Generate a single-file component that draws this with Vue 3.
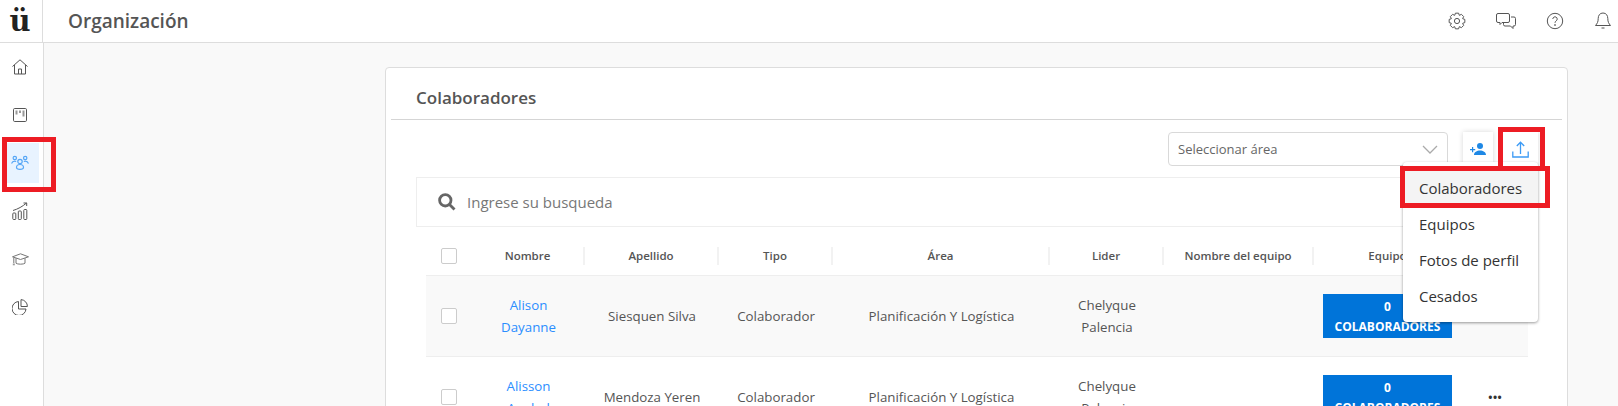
<script setup>
const navItems = [
  { id: 'home', active: false },
  { id: 'board', active: false },
  { id: 'team', active: true },
  { id: 'chart', active: false },
  { id: 'cap', active: false },
  { id: 'pie', active: false },
];

const exportOptions = ['Colaboradores', 'Equipos', 'Fotos de perfil', 'Cesados'];

const columns = ['Nombre', 'Apellido', 'Tipo', 'Área', 'Lider', 'Nombre del equipo', 'Equipo'];

const rows = [
  { name: 'Alison Dayanne', lastName: 'Siesquen Silva', type: 'Colaborador', area: 'Planificación Y Logística', leader: 'Chelyque Palencia' },
  { name: 'Alisson Anabel', lastName: 'Mendoza Yeren', type: 'Colaborador', area: 'Planificación Y Logística', leader: 'Chelyque Palencia' },
];

// gear outline, 8 teeth
function gearPath() {
  const points = [];
  for (let i = 0; i < 8; i++) {
    const a = (i * Math.PI) / 4;
    const spots = [[-0.39, 6.1], [-0.2, 8], [0.2, 8], [0.39, 6.1]];
    spots.forEach(([off, r]) => {
      points.push(`${(9 + r * Math.sin(a + off)).toFixed(2)} ${(9 - r * Math.cos(a + off)).toFixed(2)}`);
    });
  }
  return 'M' + points.join('L') + 'Z';
}
const gear = gearPath();
</script>

<template>
  <div class="app">
    <header class="topbar">
      <div class="logo">ü</div>
      <h1 class="page-title">Organización</h1>
      <div class="top-icons">
        <svg width="18" height="18" viewBox="0 0 18 18" class="line-icon">
          <path :d="gear" stroke-linejoin="round" />
          <circle cx="9" cy="9" r="2.6" />
        </svg>
        <svg width="20" height="18" viewBox="0 0 20 18" class="line-icon">
          <path d="M2 1.5h10a1.5 1.5 0 0 1 1.5 1.5v6A1.5 1.5 0 0 1 12 10.500H6L4 12.500v-2H2A1.500 1.500 0 0 1 .5 9V3A1.500 1.500 0 0 1 2 1.500Z" />
          <path d="M15 5h3a1.500 1.500 0 0 1 1.500 1.500v6A1.500 1.500 0 0 1 18 14h-1v2.500L14.500 14H9a1.500 1.500 0 0 1-1.500-1.500v-1.500" />
        </svg>
        <svg width="18" height="18" viewBox="0 0 18 18" class="line-icon">
          <circle cx="9" cy="9" r="7.700" />
          <path d="M6.800 7a2.200 2.200 0 1 1 3.500 1.800c-.8.6-1.300 1-1.300 2" />
          <circle cx="9" cy="13" r=".5" />
        </svg>
        <svg width="18" height="18" viewBox="0 0 18 18" class="line-icon">
          <path d="M9 1c3.300 0 4.800 2.600 4.800 5.500 0 3.500 1 5 2.700 7H1.500c1.700-2 2.700-3.500 2.700-7C4.200 3.600 5.700 1 9 1Z" />
          <path d="M7.500 16h3" />
        </svg>
      </div>
    </header>

    <div class="body">
      <nav class="sidebar">
        <a v-for="item in navItems" :key="item.id" class="nav-item" :class="{ active: item.active }">
          <svg v-if="item.id === 'home'" width="16" height="16" viewBox="0 0 16 16" class="line-icon">
            <path d="M.5 7.500 8 .8l7.500 6.700M2.500 6v9h11V6M6.500 15v-5h3v5" />
          </svg>
          <svg v-else-if="item.id === 'board'" width="16" height="16" viewBox="0 0 16 16" class="line-icon">
            <rect x="1.500" y="1.500" width="13" height="13" rx="1.200" />
            <path class="thick" d="M4.500 3.500v4M8 3.500v2.500M11.500 3.500v6" />
          </svg>
          <svg v-else-if="item.id === 'team'" width="18" height="16" viewBox="0 0 18 16" class="line-icon blue team-icon">
            <circle cx="3.800" cy="3" r="1.700" />
            <circle cx="14.200" cy="3" r="1.700" />
            <circle cx="9" cy="6.500" r="2.200" />
            <path d="M.5 8.500c.6-1.600 1.800-2.300 3.300-2.300.6 0 1 .1 1.400.3M17.500 8.500c-.6-1.600-1.800-2.300-3.300-2.300-.6 0-1 .1-1.400.3" />
            <path d="M5.500 12.500c0-2 1.500-3 3.500-3s3.500 1 3.500 3c0 1.200-1.500 1.800-3.500 1.800s-3.500-.6-3.500-1.800Z" />
          </svg>
          <svg v-else-if="item.id === 'chart'" width="16" height="18" viewBox="0 0 16 18" class="line-icon">
            <rect x=".8" y="11" width="3" height="6.500" rx=".8" />
            <rect x="6.300" y="9" width="3" height="8.500" rx=".8" />
            <rect x="11.800" y="7.500" width="3" height="10" rx=".8" />
            <path d="M1 8.500C6 7 10.500 4.500 14.500 1M11.500 1h3.200v3" />
          </svg>
          <svg v-else-if="item.id === 'cap'" width="17" height="13" viewBox="0 0 17 13" class="line-icon light">
            <path d="M8.500 .8 16.500 3.800 8.500 6.500 .5 3.800Z" />
            <path d="M4 5.200v5c1.200 1.300 7.800 1.300 9 0v-5" />
            <path d="M1.800 4.500v5.500" />
            <path class="thick" d="M1.800 10.500v1.800" />
          </svg>
          <svg v-else width="16" height="16" viewBox="0 0 16 16" class="line-icon">
            <path d="M6.500 2.500a7 7 0 1 0 7.500 7.500H6.500Z" />
            <path d="M9 .6a6.800 6.800 0 0 1 6.400 6.900H9Z" />
          </svg>
        </a>
      </nav>

      <main class="main">
        <section class="card">
          <h2 class="card-title">Colaboradores</h2>

          <div class="toolbar">
            <div class="area-select">
              <span>Seleccionar área</span>
              <svg width="16" height="9" viewBox="0 0 16 9" class="chevron">
                <path d="M1 1l7 7 7-7" />
              </svg>
            </div>
            <button class="tool-btn">
              <svg width="16" height="12" viewBox="0 0 16 12" fill="#1e88e5">
                <circle cx="10" cy="3" r="3" />
                <path d="M4 12c0-3 3-4.500 6-4.500s6 1.500 6 4.500ZM2 4h1.200v2H5.200v1.200H3.200v2H2v-2H0V6h2Z" />
              </svg>
            </button>
            <button class="tool-btn upload">
              <svg width="17" height="17" viewBox="0 0 17 17" class="line-icon upload-icon">
                <path d="M8.500 13V1.500M4.800 5 8.500 1.200 12.200 5M.8 10.500v5.500h15.400v-5.500" />
              </svg>
            </button>
            <ul class="export-menu">
              <li v-for="(option, i) in exportOptions" :key="option" :class="{ hovered: i === 0 }">{{ option }}</li>
            </ul>
          </div>

          <div class="search">
            <svg width="18" height="18" viewBox="0 0 18 18" class="search-icon">
              <circle cx="7.300" cy="7.300" r="5.700" />
              <path d="M11.500 11.500 16.500 16.500" />
            </svg>
            <span>Ingrese su busqueda</span>
          </div>

          <table class="people">
            <colgroup>
              <col class="c-check" /><col class="c-name" /><col class="c-last" /><col class="c-type" />
              <col class="c-area" /><col class="c-lead" /><col class="c-team" /><col class="c-btn" /><col class="c-more" />
            </colgroup>
            <thead>
              <tr>
                <th><span class="check"></span></th>
                <th v-for="col in columns" :key="col"><span class="th-label">{{ col }}</span></th>
                <th></th>
              </tr>
            </thead>
            <tbody>
              <tr v-for="row in rows" :key="row.name">
                <td><span class="check"></span></td>
                <td><a class="person">{{ row.name }}</a></td>
                <td>{{ row.lastName }}</td>
                <td>{{ row.type }}</td>
                <td>{{ row.area }}</td>
                <td><span class="leader">{{ row.leader }}</span></td>
                <td></td>
                <td>
                  <button class="count-btn"><span>0</span><span>COLABORADORES</span></button>
                </td>
                <td class="more">•••</td>
              </tr>
            </tbody>
          </table>
        </section>
      </main>
    </div>

    <!-- red callouts drawn on top of the capture -->
    <span class="callout callout-nav"></span>
    <span class="callout callout-upload"></span>
    <span class="callout callout-option"></span>
  </div>
</template>

<style>
body {
  margin: 0;
}
</style>

<style scoped>
.app {
  position: relative;
  display: flex;
  flex-direction: column;
  width: 1618px;
  height: 406px;
  overflow: hidden;
  background: #fff;
  font-family: "Open Sans", "Noto Sans", sans-serif;
  color: #555;
}

.line-icon {
  flex-shrink: 0;
  fill: none;
  stroke: #555;
  stroke-width: 1;
}

.line-icon .thick {
  stroke: #999;
  stroke-width: 2;
}

.line-icon.light {
  stroke: #777;
}

.line-icon.blue {
  stroke: #55a6f6;
  stroke-width: 1.200;
}

.team-icon {
  margin-left: -1px;
}

.topbar {
  display: flex;
  align-items: center;
  height: 42px;
  flex-shrink: 0;
  border-bottom: 1px solid #ddd;
}

.logo {
  display: flex;
  align-items: center;
  justify-content: center;
  width: 43px;
  height: 42px;
  box-sizing: border-box;
  padding-right: 2px;
  border-right: 1px solid #ddd;
  font-family: "DejaVu Serif", serif;
  font-size: 29px;
  font-weight: 700;
  color: #222;
}

.page-title {
  margin: 0 0 1px 25px;
  font-size: 19px;
  font-weight: 600;
  color: #555;
}

.top-icons {
  display: flex;
  align-items: center;
  gap: 30px;
  margin-left: auto;
  margin-right: 6px;
}

.body {
  display: flex;
  flex: 1;
  min-height: 0;
}

.sidebar {
  display: flex;
  flex-direction: column;
  gap: 8px;
  width: 43px;
  flex-shrink: 0;
  box-sizing: content-box;
  padding-top: 4px;
  border-right: 1px solid #ddd;
}

.nav-item {
  display: flex;
  align-items: center;
  width: 32px;
  height: 40px;
  margin-left: 7px;
  padding-left: 5px;
  box-sizing: border-box;
}

.nav-item.active {
  background: #e8f3ff;
}

.main {
  flex: 1;
  min-width: 0;
  padding: 24px 50px 0 341px;
  background: #f9f9f9;
}

.card {
  height: 400px;
  box-sizing: border-box;
  border: 1px solid #ddd;
  border-radius: 4px;
  background: #fff;
}

.card-title {
  display: flex;
  align-items: center;
  height: 43px;
  margin: 0 5px;
  padding: 8px 0 0 25px;
  border-bottom: 1px solid #d5d5d5;
  box-sizing: content-box;
  font-size: 17px;
  font-weight: 600;
  color: #555;
}

.toolbar {
  position: relative;
  display: flex;
  justify-content: flex-end;
  margin-top: 12px;
  padding-right: 29px;
}

.area-select {
  display: flex;
  align-items: center;
  justify-content: space-between;
  width: 280px;
  height: 34px;
  box-sizing: border-box;
  margin-right: 15px;
  padding: 0 9px;
  border: 1px solid #d9d9d9;
  border-radius: 4px;
  font-size: 13px;
  color: #666;
}

.chevron {
  fill: none;
  stroke: #aaa;
  stroke-width: 1.300;
}

.tool-btn {
  display: flex;
  align-items: center;
  justify-content: center;
  width: 30px;
  height: 34px;
  padding: 0;
  border: 0;
  background: #fff;
  box-shadow: 0 0 5px rgba(0, 0, 0, 0.16);
}

.tool-btn.upload {
  margin-left: 10px;
  width: 35px;
}

.upload-icon {
  stroke: #3d9bf5;
  stroke-width: 1.300;
}

.export-menu {
  position: absolute;
  top: 30px;
  right: 29px;
  z-index: 2;
  width: 135px;
  height: 160px;
  box-sizing: border-box;
  margin: 0;
  padding: 8px 0 0;
  list-style: none;
  border-radius: 4px;
  background: #fff;
  box-shadow: 0 1px 3px rgba(0, 0, 0, 0.4);
  font-size: 15px;
  color: #333;
}

.export-menu li {
  display: flex;
  align-items: center;
  height: 36px;
  padding-left: 16px;
}

.export-menu li.hovered {
  background: #f4f4f4;
}

.search {
  display: flex;
  align-items: center;
  gap: 11px;
  height: 50px;
  box-sizing: border-box;
  margin: 11px 37px 0 30px;
  padding-left: 21px;
  border: 1px solid #eee;
  font-size: 15px;
  color: #777;
}

.search-icon {
  fill: none;
  stroke: #666;
  stroke-width: 2.800;
}

.people {
  width: 1102px;
  margin: 3px 0 0 40px;
  table-layout: fixed;
  border-collapse: collapse;
  font-size: 13.300px;
  color: #555;
}

.c-check { width: 46px; }
.c-name { width: 113px; }
.c-last { width: 134px; }
.c-type { width: 114px; }
.c-area { width: 217px; }
.c-lead { width: 114px; }
.c-team { width: 150px; }
.c-btn { width: 147px; }
.c-more { width: 67px; }

.people th {
  height: 38px;
  padding: 7px 0 0;
  border-bottom: 1px solid #eee;
  font-size: 11.500px;
  font-weight: 600;
  text-align: center;
}

.th-label {
  display: block;
  line-height: 18px;
  border-right: 2px solid #f2f2f2;
}

.people th:nth-child(8) .th-label {
  border-right: 0;
}

.people td {
  height: 80px;
  padding: 0;
  border-bottom: 1px solid #eee;
  text-align: center;
  line-height: 22px;
}

.people tbody tr:nth-child(odd) {
  background: #f9f9f9;
}

.check {
  display: block;
  width: 16px;
  height: 16px;
  margin-left: 15px;
  border: 1px solid #ccc;
  border-radius: 2px;
  box-sizing: border-box;
  background: #fff;
}

.person {
  display: block;
  width: 80px;
  margin: 0 auto;
  color: #2b8eff;
}

.leader {
  display: block;
  width: 80px;
  margin: 0 auto;
}

.count-btn {
  display: flex;
  flex-direction: column;
  align-items: center;
  width: 129px;
  height: 44px;
  margin: 0 auto;
  padding: 3px 0 0;
  border: 0;
  background: #0074d9;
  font-family: inherit;
  font-size: 12px;
  font-weight: 700;
  line-height: 20px;
  color: #fff;
}

.more {
  font-size: 15px;
  letter-spacing: -1px;
  color: #333;
}

.callout {
  position: absolute;
  z-index: 3;
  box-sizing: border-box;
  border: 5px solid #ed1c24;
  pointer-events: none;
}

.callout-nav {
  left: 2px;
  top: 137px;
  width: 54px;
  height: 55px;
}

.callout-upload {
  left: 1498px;
  top: 127px;
  width: 47px;
  height: 44px;
}

.callout-option {
  left: 1400px;
  top: 166px;
  width: 150px;
  height: 42px;
}
</style>
